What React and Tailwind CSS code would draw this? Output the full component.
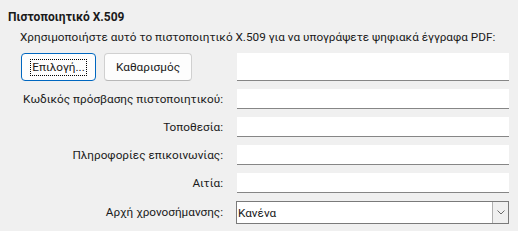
export default function App() {
  const rows = [
    'Κωδικός πρόσβασης πιστοποιητικού:',
    'Τοποθεσία:',
    'Πληροφορίες επικοινωνίας:',
    'Αιτία:',
  ];

  return (
    <div className="w-[518px] h-[231px] bg-[#f0f0f0] text-[#1a1a1a] text-[11.75px] leading-[16px] font-['Roboto',sans-serif] overflow-hidden">
      <div className="pl-2 pt-[9px] font-bold text-[12px] leading-[16px] whitespace-nowrap">Πιστοποιητικό X.509</div>
      <div className="pl-5 mt-[4px] leading-[16px] whitespace-nowrap">
        Χρησιμοποιήστε αυτό το πιστοποιητικό X.509 για να υπογράψετε ψηφιακά έγγραφα PDF:
      </div>

      <div className="ml-[21px] mt-[8px] grid grid-cols-[202px_272px] gap-x-[14px] gap-y-2">
        <div className="flex h-[28px] gap-2">
          <button className="w-[75px] h-[28px] rounded-[4px] border border-[#0067c0] bg-[#fdfdfd] flex items-center justify-center">
            <span className="border border-dotted border-black px-[1px] leading-[15px] whitespace-nowrap">Επιλογή...</span>
          </button>
          <button className="w-[88px] h-[28px] rounded-[4px] border border-[#d0d0d0] border-b-[#b8b8b8] bg-[#fdfdfd] whitespace-nowrap">
            Καθαρισμός
          </button>
        </div>
        <div className="h-[28px] bg-white border-b border-[#868686]" />

        {rows.map(label => (
          <div key={label} className="contents">
            <div className="h-5 flex items-center justify-end whitespace-nowrap">{label}</div>
            <div className="h-5 bg-white border-b border-[#868686]" />
          </div>
        ))}

        <div className="h-[22px] flex items-center justify-end whitespace-nowrap">Αρχή χρονοσήμανσης:</div>
        <div className="h-[23px] -ml-px flex bg-white border border-[#7a7a7a]">
          <div className="flex-1 flex items-center pl-px">Κανένα</div>
          <div className="w-4 bg-[#f0f0f0] border-l border-[#b0b0b0] flex items-center justify-center">
            <svg width="8" height="5" viewBox="0 0 8 5" fill="none">
              <path d="M0.5 0.5 L4 4 L7.5 0.5" stroke="#6b6b6b" strokeWidth="1" />
            </svg>
          </div>
        </div>
      </div>
    </div>
  );
}
